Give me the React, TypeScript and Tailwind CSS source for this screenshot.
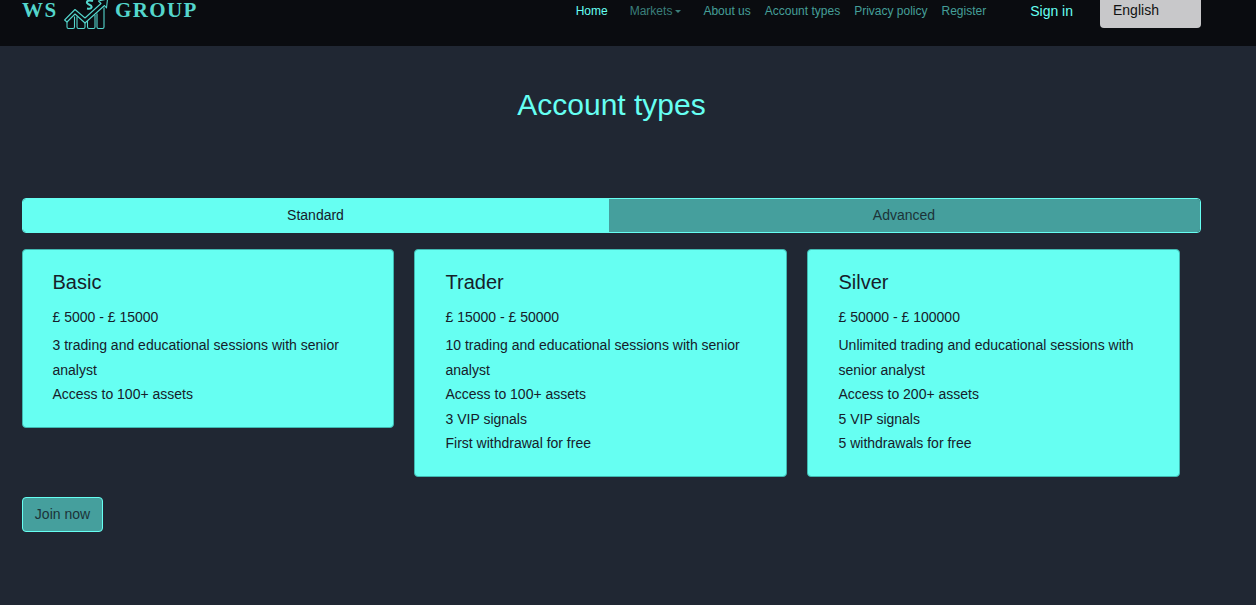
import React from 'react';

const navLinks = ['About us', 'Account types', 'Privacy policy', 'Register'];

const plans = [
  {
    name: 'Basic',
    box: 'w-[372px] pl-[29.5px]',
    range: '£ 5000 - £ 15000',
    lines: ['3 trading and educational sessions with senior analyst', 'Access to 100+ assets'],
  },
  {
    name: 'Trader',
    box: 'w-[373px] pl-[30.5px]',
    range: '£ 15000 - £ 50000',
    lines: ['10 trading and educational sessions with senior analyst', 'Access to 100+ assets', '3 VIP signals', 'First withdrawal for free'],
  },
  {
    name: 'Silver',
    box: 'w-[373px] pl-[30.5px]',
    range: '£ 50000 - £ 100000',
    lines: ['Unlimited trading and educational sessions with senior analyst', 'Access to 200+ assets', '5 VIP signals', '5 withdrawals for free'],
  },
];

function LogoMark() {
  return (
    <svg width="44" height="30" viewBox="0 0 44 30" fill="none" stroke="#54d6cc" strokeWidth="1.1" strokeLinejoin="round" className="shrink-0">
      <path d="M0.6 20 L11 9.5 L21 18 L37 3.5 L34.5 1 L43.5 -1 L42.5 8 L40.5 5.5 L21 23 L11 14 L3 22 Z" />
      <path d="M3 22 V27 Q3 28.5 4.5 28.5 H9 Q10.5 28.5 10.5 27 V16.5" />
      <path d="M13 16.5 V27 Q13 28.5 14.5 28.5 H19.5 Q21 28.5 21 27 V23" />
      <path d="M23.5 21 V27 Q23.5 28.5 25 28.5 H29.5 Q31 28.5 31 27 V15" />
      <path d="M33 13.5 V27 Q33 28.5 34.5 28.5 H38.5 Q40 28.5 40 27 V7.5" />
      <path d="M29 1 C23 -1 21 3 25 4.5 C29 6 28.5 9.5 23 8.5" strokeWidth="2" />
    </svg>
  );
}

export default function App() {
  return (
    <div className="min-h-[605px] bg-[#202733] font-['Liberation_Sans',Arial,sans-serif] overflow-hidden">
      <nav className="h-[46px] bg-[#0a0c10] flex items-start pl-[22px] pr-[55px]">
        <div className="flex items-start font-['Liberation_Serif',serif] font-bold text-[21px] leading-[20px] text-[#54d6cc] tracking-[1.4px]">
          <span className="w-[42px]">WS</span>
          <LogoMark />
          <span className="ml-[7px]">GROUP</span>
        </div>
        <div className="ml-auto flex items-start pt-[4px] text-xs leading-[14px]">
          <a className="text-[#66fff2]">Home</a>
          <a className="ml-[22px] text-[#3b7f7b] flex items-center">
            Markets
            <span className="ml-[3px] border-x-[3px] border-t-[3px] border-x-transparent border-t-[#3b7f7b]" />
          </a>
          <div className="ml-[22px] flex gap-[14px] text-[#459f98]">
            {navLinks.map((l) => (
              <a key={l}>{l}</a>
            ))}
          </div>
          <a className="ml-[44px] text-sm leading-[14px] text-[#66fff2]">Sign in</a>
          <div className="ml-[27px] -mt-[4px] w-[101px] h-[28px] bg-[#c8c8ca] rounded-b-[4px] pl-[13px] text-sm leading-[21px] text-[#111]">
            English
          </div>
        </div>
      </nav>

      <main className="pl-[22px] pr-[55px]">
        <h1 className="pt-[41px] text-center text-[30px] leading-[36px] text-[#66fff2]">Account types</h1>

        <div className="mt-[75px] flex h-[35px] rounded-[4px] border border-[#66fff2] overflow-hidden text-sm">
          <button className="w-[586px] bg-[#66fff2] text-[#16202a] pb-[2px] pr-[1px]">Standard</button>
          <button className="flex-1 bg-[#459f9d] text-[#1c3338] pb-[2px] pr-[1px]">Advanced</button>
        </div>

        <div className="mt-[16px] flex items-start gap-[20px]">
          {plans.map((p) => (
            <div key={p.name} className={`${p.box} rounded-[4px] border border-[#3fb8b0] bg-[#66fff2] pr-[29.5px] pt-[18px] pb-[20.5px] text-[#16202a]`}>
              <h2 className="text-xl leading-[28px] mb-[9px]">{p.name}</h2>
              <p className="text-sm leading-[24.5px] mb-[3.5px]">{p.range}</p>
              {p.lines.map((l) => (
                <p key={l} className="text-sm leading-[24.5px]">{l}</p>
              ))}
            </div>
          ))}
        </div>

        <button className="mt-[20px] block h-[35px] w-[81px] rounded-[4px] border border-[#66fff2] bg-[#459f9d] text-sm text-[#1c3338] pb-[2px]">
          Join now
        </button>
      </main>
    </div>
  );
}
